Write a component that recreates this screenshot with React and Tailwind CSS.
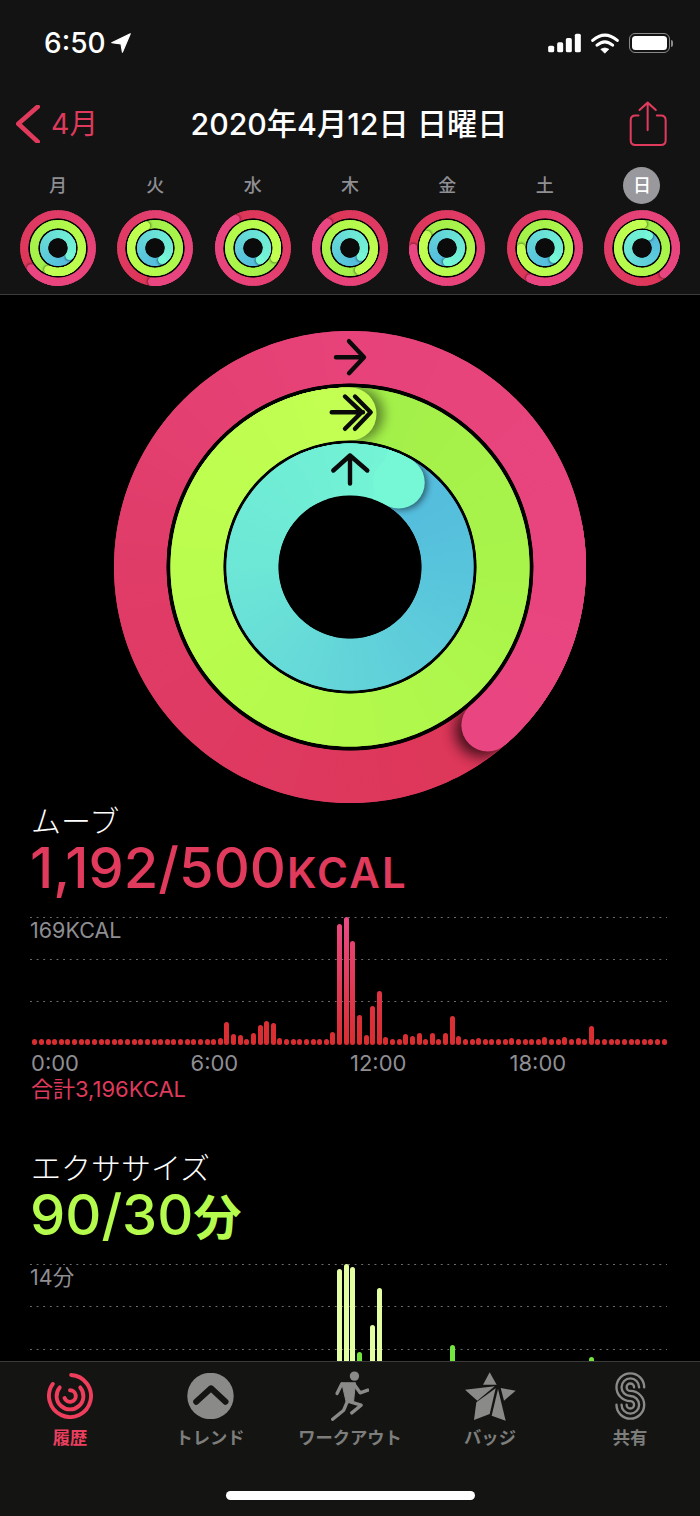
import React from "react";

const polar = (c, r, a) => [c + r * Math.sin((a * Math.PI) / 180), c - r * Math.cos((a * Math.PI) / 180)];
const arc = (c, r, a0, a1) => {
  const [x0, y0] = polar(c, r, a0);
  const [x1, y1] = polar(c, r, a1);
  return `M${x0.toFixed(2)} ${y0.toFixed(2)}A${r} ${r} 0 ${a1 - a0 > 180 ? 1 : 0} 1 ${x1.toFixed(2)} ${y1.toFixed(2)}`;
};
const hex = (h) => [1, 3, 5].map((i) => parseInt(h.slice(i, i + 2), 16));
const mix = (a, b, t) => {
  const A = hex(a), B = hex(b);
  return `rgb(${A.map((v, i) => Math.round(v + (B[i] - v) * t)).join(",")})`;
};
const stopColor = (stops, t) => {
  for (let i = 0; i < stops.length - 1; i++) {
    if (t <= stops[i + 1][0]) return mix(stops[i][1], stops[i + 1][1], (t - stops[i][0]) / (stops[i + 1][0] - stops[i][0]));
  }
  return stops[stops.length - 1][1];
};

const PINK = [[0, "#dd3658"], [130, "#e03c68"], [220, "#e7437a"], [360, "#e94681"]];
const GREEN = [[0, "#a3ef4a"], [90, "#a9f44b"], [180, "#b3f94c"], [270, "#bbfd4e"], [360, "#c2ff52"]];
const BLUE = [[0, "#54badd"], [60, "#58c4dc"], [150, "#63d4d9"], [240, "#6de7d6"], [330, "#72f1d5"], [360, "#76f7d6"]];

function Band({ id, c, r, w, head, stops, step, overlap, shadow }) {
  const segs = [];
  for (let t = 0; t < 360; t += step) segs.push(t);
  const seg = (t) => (
    <path key={t} d={arc(c, r, head + t, head + t + step + overlap)} stroke={stopColor(stops, t)} strokeWidth={w} fill="none" />
  );
  const ro = r + w / 2, ri = r - w / 2;
  const [sx, sy] = polar(c, r, head + (shadow.offset / r) * 57.3);
  const [hx, hy] = polar(c, r, head);
  const ann = `M${c - ro} ${c}a${ro} ${ro} 0 1 0 ${2 * ro} 0a${ro} ${ro} 0 1 0 ${-2 * ro} 0ZM${c - ri} ${c}a${ri} ${ri} 0 1 0 ${2 * ri} 0a${ri} ${ri} 0 1 0 ${-2 * ri} 0Z`;
  return (
    <g>
      <defs>
        <clipPath id={`clip${id}`}><path d={ann} clipRule="evenodd" /></clipPath>
        <filter id={`blur${id}`} x="-60%" y="-60%" width="220%" height="220%"><feGaussianBlur stdDeviation={shadow.blur} /></filter>
      </defs>
      {segs.map(seg)}
      <g clipPath={`url(#clip${id})`}>
        <circle cx={sx} cy={sy} r={w / 2} fill="#000" opacity={shadow.opacity} filter={`url(#blur${id})`} />
      </g>
      {segs.filter((t) => t >= 300 && t + step + overlap < 360).map(seg)}
      <path d={arc(c, r, head - 12, head)} stroke={stops[stops.length - 1][1]} strokeWidth={w} fill="none" />
      <circle cx={hx} cy={hy} r={w / 2} fill={stops[stops.length - 1][1]} />
    </g>
  );
}

function MiniRing({ i, heads }) {
  const s = { offset: 1, blur: 1, opacity: 0.45 };
  const common = { c: 38, w: 8.3, step: 5, overlap: 4, shadow: s };
  return (
    <svg width="76" height="76" viewBox="0 0 76 76" className="block">
      <Band id={`m${i}p`} r={33.7} head={heads[0]} stops={PINK} {...common} />
      <circle cx="38" cy="38" r="29.6" fill="#000" />
      <Band id={`m${i}g`} r={23.85} head={heads[1]} stops={GREEN} {...common} />
      <circle cx="38" cy="38" r="19.3" fill="#000" />
      <Band id={`m${i}b`} r={13.85} head={heads[2]} stops={BLUE} {...common} />
      <circle cx="38" cy="38" r="9.7" fill="#0b0b0b" />
    </svg>
  );
}

function BigRing() {
  const c = 236;
  const ox = 114, oy = 330.5;
  const arrow = { stroke: "#0a0a0a", strokeWidth: 4.4, fill: "none", strokeLinecap: "round", strokeLinejoin: "round" };
  return (
    <svg width="472" height="472" viewBox="0 0 472 472" className="block mx-auto">
      <Band id="bp" c={c} r={209.75} w={52.5} head={139} stops={PINK} step={1} overlap={1} shadow={{ offset: 8, blur: 7, opacity: 0.7 }} />
      <circle cx={c} cy={c} r="183.5" fill="#000" />
      <Band id="bg" c={c} r={153} w={53} head={0} stops={GREEN} step={1} overlap={1} shadow={{ offset: 7, blur: 6, opacity: 0.45 }} />
      <circle cx={c} cy={c} r="126.5" fill="#000" />
      <Band id="bb" c={c} r={97.5} w={52} head={30} stops={BLUE} step={1} overlap={1} shadow={{ offset: 3, blur: 3, opacity: 0.5 }} />
      <circle cx={c} cy={c} r="71.5" fill="#000" />
      <g transform={`translate(${-ox} ${-oy})`} {...arrow}>
        <path d="M336 356.7H363M349 340.7L364 356.7L349 372.7" />
        <path d="M331.7 411.7H363M345 396L361.7 411.7L345 428.3M355 396L370.7 411.7L355 428.3" />
        <path d="M350 483V455M333.3 470L350 455L367.3 470" />
      </g>
    </svg>
  );
}

const redH = {};
for (let i = 0; i < 96; i++) redH[i] = 5.5;
Object.assign(redH, {
  28: 7, 29: 23, 30: 11, 31: 10, 33: 12, 34: 19.6, 35: 24, 36: 22, 37: 6.5,
  45: 13, 46: 121, 47: 128.3, 48: 104, 49: 30, 50: 9.6, 51: 39, 52: 53.7, 53: 7.6,
  56: 11.3, 57: 8.6, 58: 11.6, 60: 12, 62: 12.3, 63: 29, 64: 8.6, 67: 6.5, 72: 6.8, 77: 7.6, 80: 8.4, 82: 7, 84: 18.6,
});
const greenTops = { 46: 1269.3, 47: 1264, 48: 1266.7, 49: 1352, 51: 1325, 52: 1287.7, 63: 1344.7, 84: 1356.7 };
const idx = Array.from({ length: 96 }, (_, i) => i);

function GridLines() {
  return (
    <div className="absolute inset-x-0 top-0">
      {[0, 1, 2].map((i) => (
        <div key={i} className="h-[42.3px]">
          <div className="h-px bg-repeat-x bg-[linear-gradient(to_right,#6e6e6e_1.6px,transparent_1.6px)] bg-[length:6.64px_1px]" />
        </div>
      ))}
    </div>
  );
}

function Chart({ label, bars }) {
  return (
    <div className="relative h-[128.3px] w-[637px]">
      <GridLines />
      <div className="absolute top-0 left-0 text-[21.5px] leading-[26px] text-[#8e8e93]">{label}</div>
      <div className="absolute inset-y-0 left-[2.3px] w-[635.4px] flex items-end justify-between">{bars}</div>
    </div>
  );
}

const redBars = idx.map((i) => {
  const h = redH[i];
  const top = mix("#da2d30", "#ec4a88", Math.pow(Math.min(1, h / 128), 1.6));
  return <div key={i} className="w-[5px] rounded-full" style={{ height: h, background: `linear-gradient(${top}, #d92d30)` }} />;
});
const greenBars = idx.map((i) => {
  const t = greenTops[i];
  if (!t) return <div key={i} className="w-[5px]" />;
  const pale = t < 1340;
  return (
    <div
      key={i}
      className={pale ? "w-[5px] rounded-full bg-[#e4ffa2]" : "w-[5px] rounded-full bg-[#74e53c]"}
      style={{ height: 1392.3 - t }}
    />
  );
});

const days = [
  ["月", [233, 204, 124]],
  ["火", [185, 338, 149]],
  ["水", [329, 115, 150]],
  ["木", [319, 158, 129]],
  ["金", [270, 303, 180]],
  ["土", [206, 270, 142]],
  ["日", [140, 2, 30]],
];

function StatusBar() {
  return (
    <div className="mt-[23px] h-[40px] flex items-center justify-between pl-[44px] pr-[27px]">
      <div className="flex items-center gap-[5px]">
        <span className="text-[28px] leading-[40px] font-medium text-white">6:50</span>
        <svg width="20" height="20" viewBox="338 42 56 54">
          <path d="M392 43L340 68L366 72L370 95Z" fill="#fff" stroke="#fff" strokeWidth="3" strokeLinejoin="round" />
        </svg>
      </div>
      <div className="flex items-center gap-[8px]">
        <svg width="33" height="20" viewBox="85 40 98 60">
          <g fill="#fff">
            <rect x="85" y="78" width="18" height="20" rx="5" />
            <rect x="112" y="68" width="18" height="30" rx="5" />
            <rect x="138" y="55" width="18" height="43" rx="5" />
            <rect x="165" y="42" width="18" height="56" rx="5" />
          </g>
        </svg>
        <svg width="32" height="22" viewBox="205 35 95 65">
          <path d="M216 60Q252 28 289 60M229 74Q252 54 275 74" stroke="#fff" strokeWidth="9" fill="none" strokeLinecap="round" />
          <path d="M240 86Q252 78 264 86L252 98Z" fill="#fff" stroke="#fff" strokeWidth="2" strokeLinejoin="round" />
        </svg>
        <div className="flex items-center gap-[1px]">
          <div className="w-[41px] h-[20px] rounded-[6px] border-[1.5px] border-[#8a8a8a] p-[2px]">
            <div className="h-full rounded-[3.5px] bg-white" />
          </div>
          <div className="w-[2.5px] h-[7px] rounded-r-full bg-[#8a8a8a]" />
        </div>
      </div>
    </div>
  );
}

function NavBar() {
  return (
    <div className="mt-[37px] h-[48px] flex items-center">
      <div className="w-[130px] flex items-center gap-[11px] pl-[16px]">
        <svg width="24" height="38" viewBox="16 105 24 38">
          <path d="M37.7 106.7L18.3 123.8L37.7 141.7" stroke="#e03a5c" strokeWidth="4.6" strokeLinecap="round" strokeLinejoin="round" fill="none" />
        </svg>
        <span className="text-[28.5px] leading-[48px] text-[#df3a5b]">4月</span>
      </div>
      <div className="flex-1 text-center text-[30.25px] leading-[48px] font-medium text-white whitespace-nowrap pr-[2px]">2020年4月12日 日曜日</div>
      <div className="w-[130px] flex justify-end pr-[33px]">
        <svg width="38" height="48" viewBox="330 240 112 134">
          <path d="M358 282H349Q335 282 335 296V355Q335 369 349 369H424Q438 369 438 355V296Q438 282 424 282H412M385 325V245M361 266L385 244L409 266" stroke="#e03a5c" strokeWidth="6" fill="none" strokeLinecap="round" strokeLinejoin="round" />
        </svg>
      </div>
    </div>
  );
}

function TabBar() {
  const label = "mt-[6px] text-[17.3px] leading-[26px] font-semibold whitespace-nowrap";
  return (
    <div className="absolute inset-x-0 bottom-0 h-[155px] bg-[#141513] border-t border-[#3a3b39]">
      <div className="mt-[11px] grid grid-cols-5">
        <div className="flex flex-col items-center">
          <svg width="46" height="46" viewBox="0 0 46 46" className="block">
            <g fill="none" stroke="#ef3d5c" strokeWidth="3.9" strokeLinecap="round">
              <path d={arc(23, 21, 3, 305)} />
              <path d={arc(23, 13.4, 50, 310)} />
              <path d={arc(23, 5.8, 0, 250)} />
            </g>
          </svg>
          <span className={`${label} text-[#ec3f5f]`}>履歴</span>
        </div>
        <div className="flex flex-col items-center">
          <svg width="47" height="46" viewBox="186.5 1373 47 46" className="block">
            <circle cx="210" cy="1396" r="23.2" fill="#8a8b88" />
            <path d="M195.7 1401.7L210.5 1388.3L225 1401.7" stroke="#151613" strokeWidth="6" strokeLinecap="round" strokeLinejoin="round" fill="none" />
          </svg>
          <span className={`${label} text-[#7d7e7c]`}>トレンド</span>
        </div>
        <div className="flex flex-col items-center">
          <svg width="38.5" height="50" viewBox="120 33 115 149" className="block -my-[2px]">
            <circle cx="190" cy="48" r="14" fill="#8a8b88" />
            <polygon points="152,68 193,68 187,128 166,128" fill="#8a8b88" stroke="#8a8b88" strokeWidth="3" strokeLinejoin="round" />
            <g stroke="#8a8b88" fill="none" strokeLinecap="round" strokeLinejoin="round" strokeWidth="10">
              <path d="M152 72L138 100" />
              <path d="M190 74L207 98L230 90" />
              <path d="M180 126L210 135L182 158" />
              <path d="M168 126L158 150L125 177" />
            </g>
          </svg>
          <span className={`${label} text-[#7d7e7c]`}>ワークアウト</span>
        </div>
        <div className="flex flex-col items-center">
          <svg width="52.7" height="50" viewBox="520 36 158 150" className="block -my-[2px]">
            <g fill="#8a8b88">
              <polygon points="597,40 618,77 577,77" />
              <polygon points="523,92 612,82 560,125" />
              <polygon points="550,183 557,130 615,88 597,165" />
              <polygon points="603,170 622,90 645,185" />
              <polygon points="630,87 675,95 640,125" />
            </g>
          </svg>
          <span className={`${label} text-[#7d7e7c]`}>バッジ</span>
        </div>
        <div className="flex flex-col items-center">
          <svg width="33" height="50" viewBox="70 36 97 148" className="block -my-[2px]">
            <g fill="none" stroke="#8a8b88" strokeWidth="7" strokeLinecap="round">
              {[[41, 11], [26, 26], [11, 41]].map(([ru, rl]) => (
                <path key={ru} d={`M${118 + ru} 84A${ru} ${ru} 0 1 0 118 ${84 + ru}A${rl} ${rl} 0 1 1 ${118 - rl} 136`} />
              ))}
            </g>
          </svg>
          <span className={`${label} text-[#7d7e7c]`}>共有</span>
        </div>
      </div>
      <div className="mt-[40px] mx-auto w-[249px] h-[9px] rounded-full bg-white" />
    </div>
  );
}

export default function App() {
  return (
    <div className="relative w-[700px] h-[1516px] overflow-hidden bg-black font-['Inter','Noto_Sans_CJK_JP',sans-serif]">
      <header className="h-[295px] bg-[#131313] border-b border-[#3c3c3c] overflow-hidden">
        <StatusBar />
        <NavBar />
        <div className="mt-[18px] grid grid-cols-7 px-[9.35px]">
          {days.map(([d], i) => (
            <div key={d} className="h-[38px] flex items-center justify-center">
              {i === 6 ? (
                <div className="w-[37px] h-[37px] rounded-full bg-[#98989d] flex items-center justify-center text-[18px] font-medium text-white">{d}</div>
              ) : (
                <span className="text-[18px] font-medium text-[#8e8e93]">{d}</span>
              )}
            </div>
          ))}
        </div>
        <div className="mt-[6.4px] grid grid-cols-7 px-[9.35px]">
          {days.map(([d, h], i) => (
            <div key={d} className="flex justify-center"><MiniRing i={i} heads={h} /></div>
          ))}
        </div>
      </header>

      <main>
        <div className="pt-[35.5px]"><BigRing /></div>

        <section className="pl-[30px]">
          <h2 className="pl-[1px] h-[36px] text-[30px] leading-[36px] font-light text-white">ムーブ</h2>
          <div className="h-[58px] leading-[58px] whitespace-nowrap font-medium text-[#e03a5c]">
            <span className="text-[56px]">1,192/500</span>
            <span className="text-[42px] font-semibold ml-[1px] tracking-[2.2px]">KCAL</span>
          </div>
          <div className="mt-[20.2px]"><Chart label="169KCAL" bars={redBars} /></div>
          <div className="mt-[5px] pl-[1px] grid grid-cols-[159.5px_159.5px_159.5px_159.5px] text-[22px] leading-[26px] text-[#8e8e93]">
            <span>0:00</span><span>6:00</span><span>12:00</span><span>18:00</span>
          </div>
          <div className="pl-[1px] text-[22px] leading-[26px] text-[#df3a5b]">合計3,196KCAL</div>
        </section>

        <section className="pl-[30px] mt-[48px]">
          <h2 className="pl-[1px] h-[36px] text-[30px] leading-[36px] font-light text-white">エクササイズ</h2>
          <div className="h-[58px] leading-[58px] whitespace-nowrap font-medium text-[#b5fb4e]">
            <span className="text-[56px]">90/30</span>
            <span className="text-[48px] font-semibold">分</span>
          </div>
          <div className="mt-[20px]"><Chart label="14分" bars={greenBars} /></div>
        </section>
      </main>

      <TabBar />
    </div>
  );
}
